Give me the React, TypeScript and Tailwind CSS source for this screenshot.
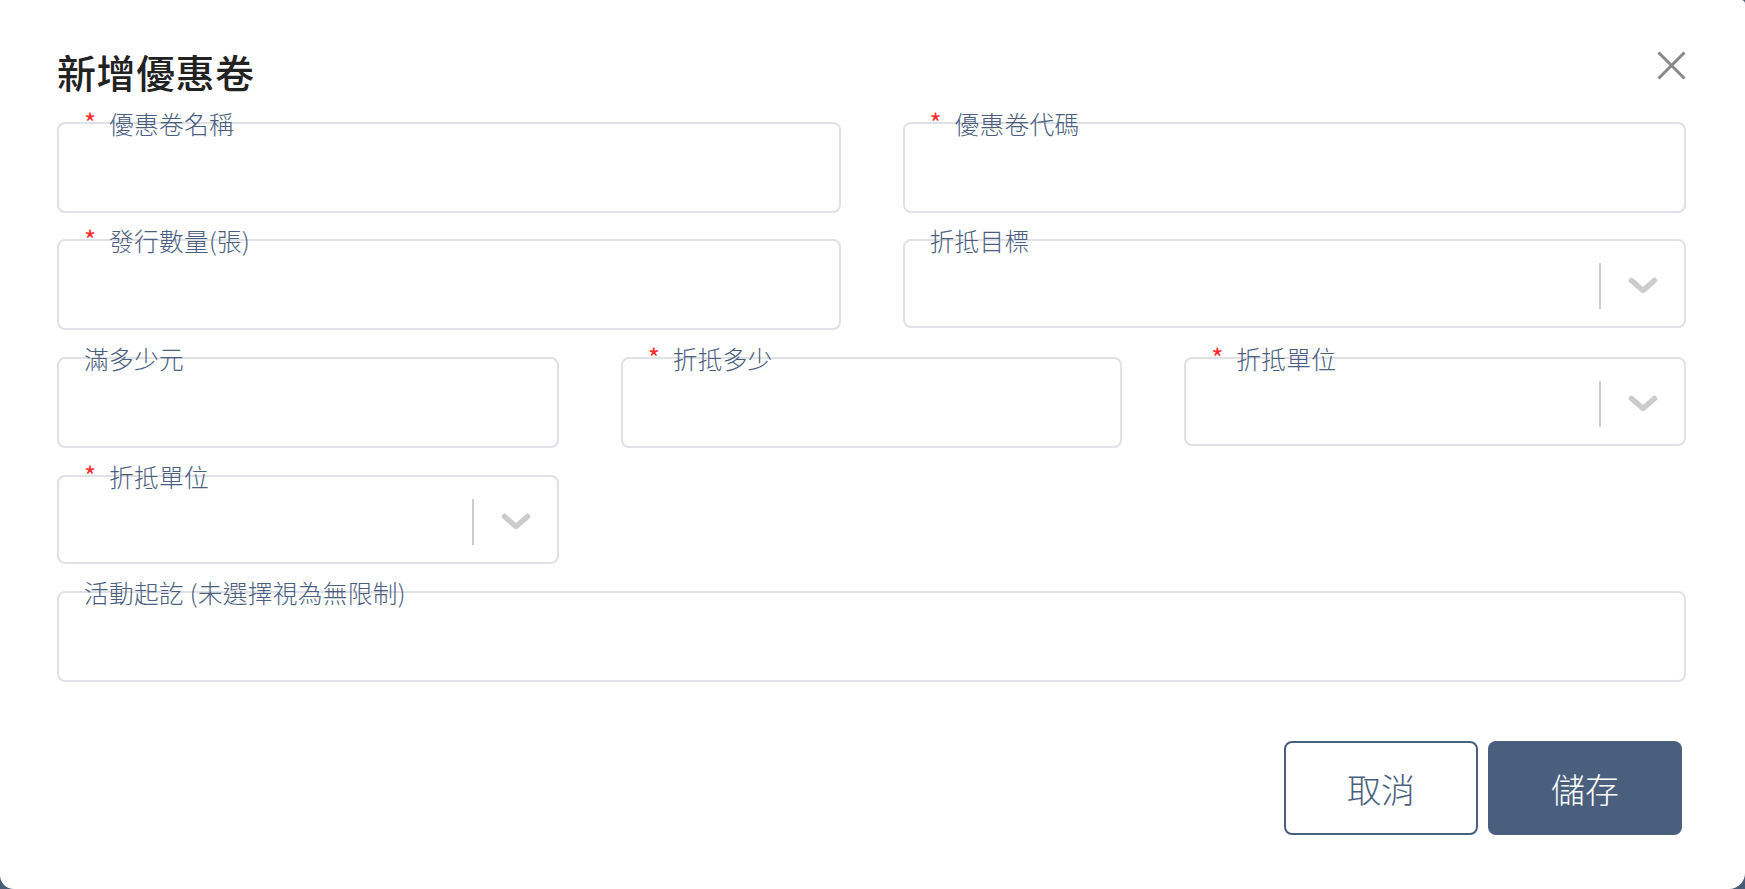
const FONT = { fontFamily: '"Noto Sans CJK TC", "Noto Sans", sans-serif' };

type FieldProps = { label: string; required?: boolean; select?: boolean };

function Label({ label, required }: { label: string; required?: boolean }) {
  return (
    <div className="absolute left-[27px] top-[-11px] flex items-start text-[24.7px] leading-[24px] font-light text-[#4a5e80] whitespace-nowrap pointer-events-none">
      {required && <span className="inline-block w-[25px] text-[#ff2a2a] text-[26px] leading-[22px] font-normal">*</span>}
      <span className="tracking-[0.3px]">{label}</span>
    </div>
  );
}

function Chevron() {
  return (
    <svg width="30" height="17" viewBox="0 0 30 17" fill="none">
      <polyline points="3.5,3.5 15,13.5 26.5,3.5" stroke="#cccccc" strokeWidth="5.5" strokeLinecap="round" strokeLinejoin="round" />
    </svg>
  );
}

function Field({ label, required, select }: FieldProps) {
  return (
    <div className="relative">
      <div
        className={`w-full border-2 border-[#dfe1e6] rounded-[8px] bg-white flex items-center ${
          select ? "h-[89px]" : "h-[91px]"
        }`}
      >
        {select && (
          <div className="ml-auto flex items-center pt-[4px]">
            <div className="w-[2px] h-[46px] bg-[#cccccc]" />
            <div className="pl-[27px] pr-[26px] flex items-center">
              <Chevron />
            </div>
          </div>
        )}
      </div>
      <Label label={label} required={required} />
    </div>
  );
}

export default function App() {
  return (
    <div className="min-h-[889px] bg-[#4a5c78]" style={FONT}>
      <div className="h-[889px] w-full bg-white rounded-bl-[14px] rounded-br-[16px] rounded-tr-[4px] pl-[57px] pr-[59px] pt-[51px]">
        {/* header */}
        <div className="flex items-start justify-between h-[40px]">
          <h1 className="text-[39px] leading-[40px] font-medium text-[#222222] tracking-[0.5px]">新增優惠卷</h1>
          <button className="w-[29px] h-[29px] mt-0">
            <svg width="29" height="29" viewBox="0 0 29 29" fill="none">
              <path d="M1.5 1.5 L27.5 27.5 M27.5 1.5 L1.5 27.5" stroke="#888888" strokeWidth="3" />
            </svg>
          </button>
        </div>

        {/* form */}
        <div className="mt-[31px] flex flex-col gap-[27px]">
          <div className="grid grid-cols-2 gap-x-[62px] gap-y-[26px] items-start">
            <Field label="優惠卷名稱" required />
            <Field label="優惠卷代碼" required />
            <Field label="發行數量(張)" required />
            <Field label="折抵目標" select />
          </div>
          <div className="grid grid-cols-3 gap-x-[62px] gap-y-[27px] items-start">
            <Field label="滿多少元" />
            <Field label="折抵多少" required />
            <Field label="折抵單位" required select />
            <Field label="折抵單位" required select />
          </div>
          <Field label="活動起訖 (未選擇視為無限制)" />
        </div>

        {/* actions */}
        <div className="mt-[59px] flex justify-end gap-[10px] pr-[4px]">
          <button className="w-[194px] h-[94px] rounded-[8px] border-2 border-[#4a5f7d] bg-white text-[34px] font-light text-[#4a5f7d]">
            取消
          </button>
          <button className="w-[194px] h-[94px] rounded-[8px] bg-[#4a5f7d] text-[34px] font-light text-white">
            儲存
          </button>
        </div>
      </div>
    </div>
  );
}
